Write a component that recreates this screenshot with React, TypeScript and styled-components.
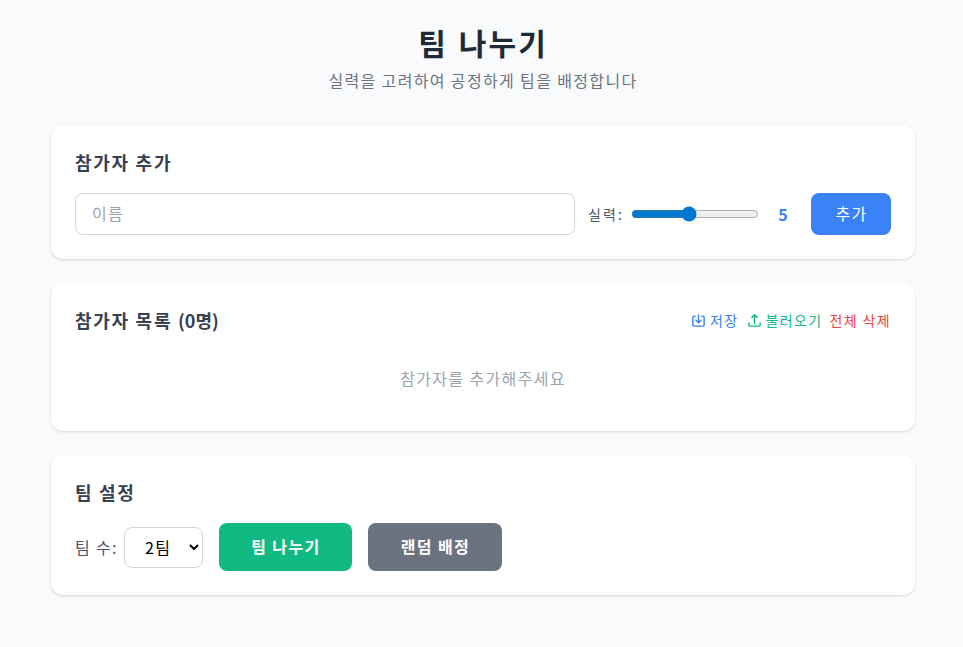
import { createGlobalStyle } from "styled-components";
import styled from "styled-components";

const Global = createGlobalStyle`
  * { box-sizing: border-box; }
  html, body { margin: 0; padding: 0; }
  body {
    background: #f9fafb;
    font-family: "Noto Sans CJK KR", "Noto Sans", sans-serif;
    color: #1f2937;
    letter-spacing: 0.085em;
  }
`;

const Page = styled.div`
  width: 864px;
  margin: 0 0 0 51px;
  padding: 25px 0 52px;
`;

const Header = styled.header`
  text-align: center;
  margin-bottom: 33px;

  h1 {
    margin: -1px 0 8px;
    font-size: 30px;
    line-height: 36px;
    font-weight: 700;
    letter-spacing: 0.07em;
    word-spacing: 2px;
    color: #1f2937;
  }
  p {
    margin: 0;
    font-size: 16px;
    line-height: 24px;
    color: #6b7280;
  }
`;

const Card = styled.section`
  background: #fff;
  border-radius: 12px;
  box-shadow: 0 1px 3px rgba(0, 0, 0, 0.1), 0 1px 2px rgba(0, 0, 0, 0.06);
  padding: 24px;
  margin-bottom: 24px;
`;

const CardTitle = styled.h2`
  margin: -1px 0 17px;
  font-size: 18px;
  line-height: 28px;
  font-weight: 600;
  letter-spacing: 0.095em;
  color: #374151;
`;

const Count = styled.span`
  letter-spacing: 0;
`;

const Row = styled.div`
  display: flex;
  align-items: center;
`;

const NameInput = styled.input`
  flex: none;
  width: 500px;
  height: 42px;
  padding: 0 16px 2px;
  font: inherit;
  font-size: 16px;
  letter-spacing: inherit;
  border: 1px solid #d1d5db;
  border-radius: 8px;
  background: #fff;
  margin-right: 13px;
  &::placeholder { color: #9ca3af; }
`;

const FieldLabel = styled.label`
  width: 35px;
  font-size: 14px;
  letter-spacing: 0.15em;
  color: #4b5563;
  white-space: nowrap;
`;

const Slider = styled.input`
  flex: none;
  width: 128px;
  margin: 0 0 0 8px;
  accent-color: #0078d4;
`;

const SkillValue = styled.span`
  width: 32px;
  margin: 0 12px 0 8px;
  text-align: center;
  font-weight: 700;
  font-size: 16px;
  letter-spacing: 0;
  color: #3b82f6;
`;

const Button = styled.button<{ $bg: string; $bold?: boolean; $w: number }>`
  flex: none;
  width: ${(p) => p.$w}px;
  height: ${(p) => (p.$bold ? "48px" : "42px")};
  padding: 0 0 2px 1px;
  border: none;
  border-radius: 8px;
  background: ${(p) => p.$bg};
  color: #fff;
  font: inherit;
  font-size: 16px;
  letter-spacing: inherit;
  font-weight: ${(p) => (p.$bold ? 600 : 400)};
`;

const ListHead = styled.div`
  display: flex;
  align-items: center;
  justify-content: space-between;
  margin: -1px 0 17px;
`;

const ListTitle = styled(CardTitle)`
  margin: 0;
`;

const Actions = styled.div`
  display: flex;
  align-items: center;
  gap: 7px;

  & > :first-child {
    margin-right: 1px;
  }
`;

const LinkButton = styled.button<{ $color: string }>`
  display: inline-flex;
  align-items: center;
  gap: 4px;
  padding: 0;
  border: none;
  background: none;
  font: inherit;
  font-size: 14px;
  line-height: 20px;
  letter-spacing: inherit;
  color: ${(p) => p.$color};
`;

const Empty = styled.p`
  margin: 0;
  padding: 15px 0 17px;
  text-align: center;
  font-size: 16px;
  line-height: 24px;
  color: #9ca3af;
`;

const Select = styled.select`
  flex: none;
  height: 41px;
  width: 79px;
  margin: 0 16px 0 6px;
  padding: 0 8px 0 16px;
  font: inherit;
  font-size: 16px;
  letter-spacing: inherit;
  color: #000;
  background: #fff;
  border: 1px solid #d1d5db;
  border-radius: 8px;
`;

const TeamLabel = styled.label`
  font-size: 16px;
  color: #4b5563;
`;

const Gap = styled.span`
  width: 16px;
`;

function SaveIcon() {
  return (
    <svg width="15" height="15" viewBox="0 0 24 24" fill="none" stroke="currentColor" strokeWidth="2.3" strokeLinecap="round" strokeLinejoin="round">
      <path d="M7 5H5a2 2 0 0 0-2 2v12a2 2 0 0 0 2 2h14a2 2 0 0 0 2-2V7a2 2 0 0 0-2-2h-2" />
      <path d="M12 3v12" />
      <path d="M8 11.5l4 4 4-4" />
    </svg>
  );
}

function LoadIcon() {
  return (
    <svg width="15" height="15" viewBox="0 0 24 24" fill="none" stroke="currentColor" strokeWidth="2.3" strokeLinecap="round" strokeLinejoin="round">
      <path d="M3 16v3a2 2 0 0 0 2 2h14a2 2 0 0 0 2-2v-3" />
      <path d="M12 17V3" />
      <path d="M8 7l4-4 4 4" />
    </svg>
  );
}

export default function App() {
  return (
    <>
      <Global />
      <Page>
        <Header>
          <h1>팀 나누기</h1>
          <p>실력을 고려하여 공정하게 팀을 배정합니다</p>
        </Header>

        <Card>
          <CardTitle>참가자 추가</CardTitle>
          <Row>
            <NameInput placeholder="이름" />
            <FieldLabel>실력:</FieldLabel>
            <Slider type="range" min={1} max={10} defaultValue={5} />
            <SkillValue>5</SkillValue>
            <Button $bg="#3b82f6" $w={80}>추가</Button>
          </Row>
        </Card>

        <Card>
          <ListHead>
            <ListTitle>참가자 목록 <Count>(0명)</Count></ListTitle>
            <Actions>
              <LinkButton $color="#3b82f6"><SaveIcon />저장</LinkButton>
              <LinkButton $color="#10b981"><LoadIcon />불러오기</LinkButton>
              <LinkButton $color="#ef4444">전체 삭제</LinkButton>
            </Actions>
          </ListHead>
          <Empty>참가자를 추가해주세요</Empty>
        </Card>

        <Card>
          <CardTitle>팀 설정</CardTitle>
          <Row>
            <TeamLabel>팀 수:</TeamLabel>
            <Select defaultValue="2">
              <option value="2">2팀</option>
              <option value="3">3팀</option>
              <option value="4">4팀</option>
            </Select>
            <Button $bg="#10b981" $bold $w={133}>팀 나누기</Button>
            <Gap />
            <Button $bg="#6b7280" $bold $w={134}>랜덤 배정</Button>
          </Row>
        </Card>
      </Page>
    </>
  );
}
